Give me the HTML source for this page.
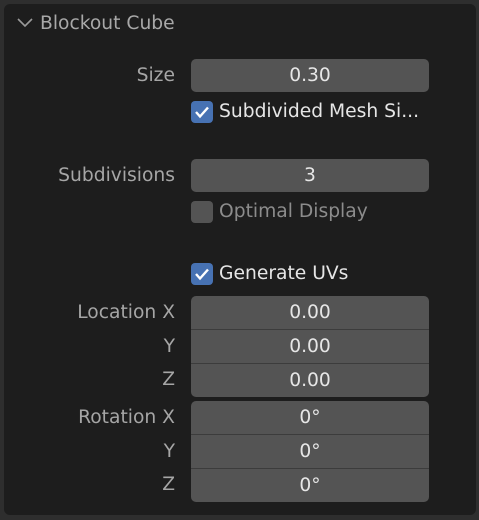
<!DOCTYPE html>
<html><head><style>
body{margin:0;width:479px;height:520px;background:#2e2e2e;overflow:hidden;font-family:"DejaVu Sans","Liberation Sans",sans-serif;}
.p{position:absolute;left:4px;top:4px;width:472px;height:511px;background:#1d1d1d;border-radius:6px;}
.a{position:absolute;}
.lbl{position:absolute;right:304px;color:#a6a6a6;font-size:18.7px;line-height:35px;text-align:right;white-space:nowrap;}
.f{position:absolute;left:191px;width:238px;background:#545454;color:#e6e6e6;font-size:18.7px;text-align:center;line-height:34px;}
.cb{position:absolute;left:191px;width:22px;height:22px;border-radius:4px;background:#4772b3;}
.cb.off{background:#545454;}
.ct{position:absolute;left:219px;font-size:18.7px;color:#e6e6e6;line-height:24px;white-space:nowrap;}
</style></head><body>
<div class="p"></div>
<svg class="a" style="left:16px;top:16px" width="18" height="14"><path d="M2 3 L9 10 L16 3" stroke="#9a9a9a" stroke-width="1.6" fill="none"/></svg>
<div class="a" style="left:40px;top:10px;color:#a8a8a8;font-size:18.7px;line-height:28px">Blockout Cube</div>

<div class="lbl" style="top:58px">Size</div>
<div class="f" style="top:59px;height:33px;border-radius:5px">0.30</div>
<div class="cb" style="top:101px"><svg width="22" height="22"><path d="M5 11 L9 15.5 L17 6.5" stroke="#fff" stroke-width="2.4" fill="none"/></svg></div>
<div class="ct" style="top:100px">Subdivided Mesh Si...</div>

<div class="lbl" style="top:158px">Subdivisions</div>
<div class="f" style="top:159px;height:33px;border-radius:5px">3</div>
<div class="cb off" style="top:201px"></div>
<div class="ct" style="top:200px;color:#8c8c8c">Optimal Display</div>

<div class="cb" style="top:263px"><svg width="22" height="22"><path d="M5 11 L9 15.5 L17 6.5" stroke="#fff" stroke-width="2.4" fill="none"/></svg></div>
<div class="ct" style="top:262px">Generate UVs</div>

<div class="lbl" style="top:295px">Location X</div>
<div class="lbl" style="top:329px">Y</div>
<div class="lbl" style="top:362px">Z</div>
<div class="f" style="top:296px;height:33px;border-radius:5px 5px 0 0;border-bottom:1px solid #3c3c3c">0.00</div>
<div class="f" style="top:330px;height:33px;border-bottom:1px solid #3c3c3c">0.00</div>
<div class="f" style="top:364px;height:33px;border-radius:0 0 5px 5px">0.00</div>

<div class="lbl" style="top:400px">Rotation X</div>
<div class="lbl" style="top:434px">Y</div>
<div class="lbl" style="top:467px">Z</div>
<div class="f" style="top:401px;height:33px;border-radius:5px 5px 0 0;border-bottom:1px solid #3c3c3c">0°</div>
<div class="f" style="top:435px;height:33px;border-bottom:1px solid #3c3c3c">0°</div>
<div class="f" style="top:469px;height:33px;border-radius:0 0 5px 5px">0°</div>
</body></html>
